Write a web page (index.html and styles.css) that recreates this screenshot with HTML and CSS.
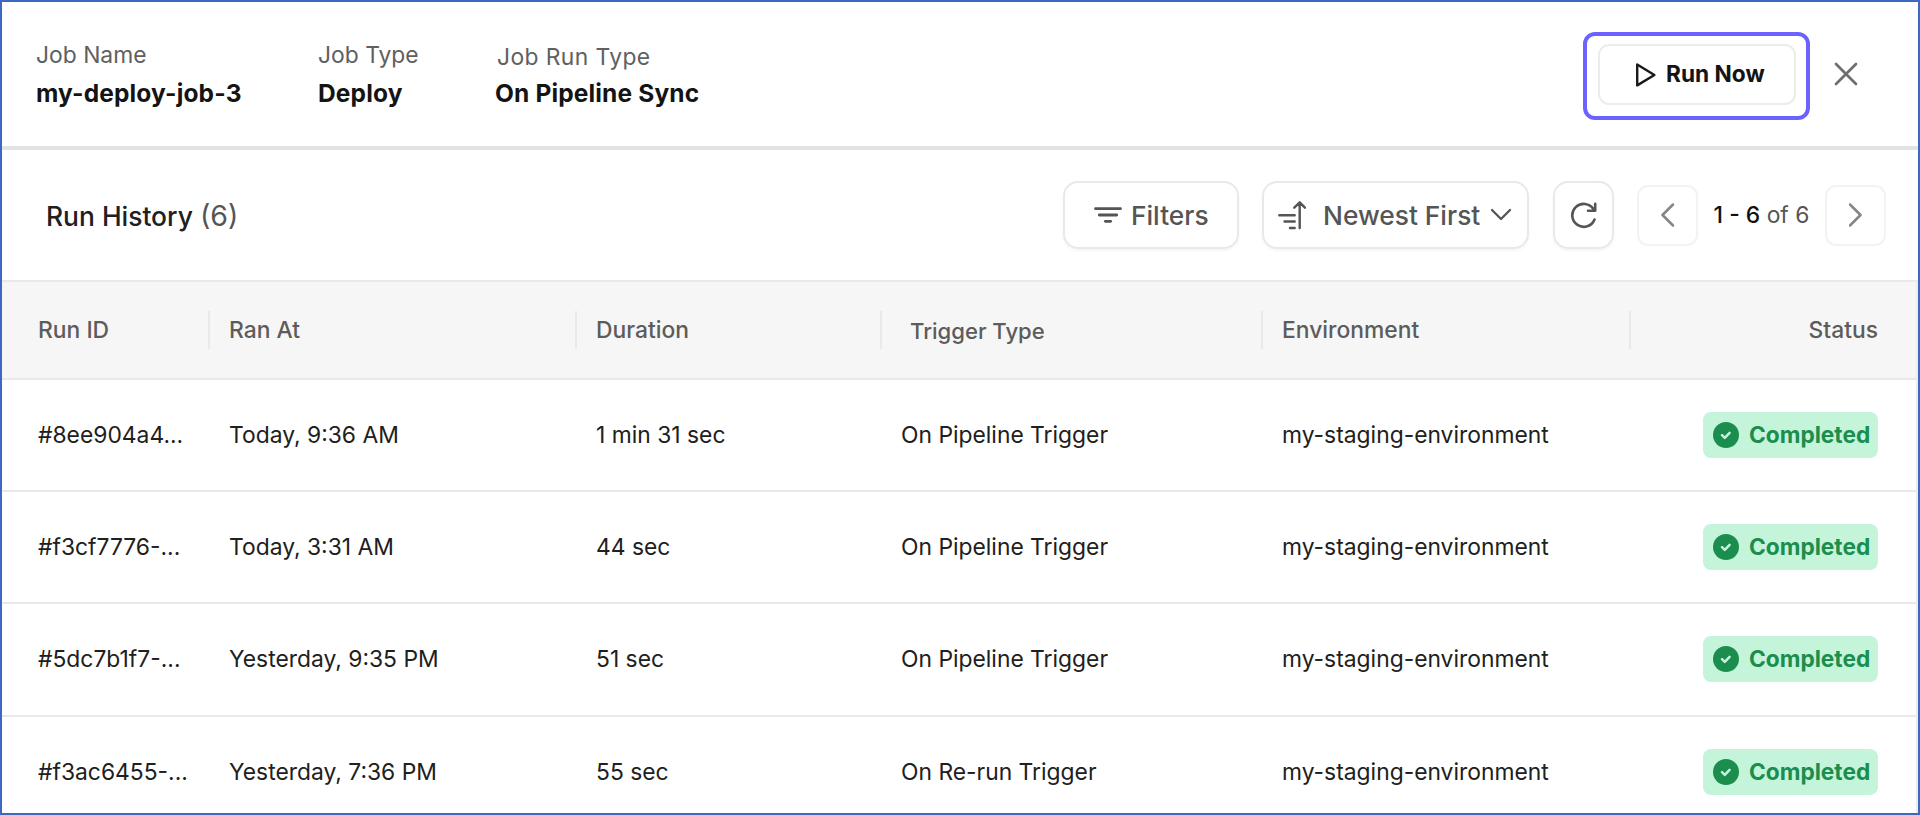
FILE: index.html
```html
<!DOCTYPE html>
<html lang="en">
<head>
    <meta charset="UTF-8">
    <meta name="viewport" content="width=device-width, initial-scale=1.0">
    <title>Run History</title>
    <link rel="stylesheet" href="styles.css">
</head>
<body>
    <svg class="sprite" width="0" height="0">
        <symbol id="check" viewBox="0 0 26 26">
            <circle cx="13" cy="13" r="13" fill="#1b8d4d"/>
            <path d="M9 13.2l2.8 2.7 4.8-5" fill="none" stroke="#c4f5da" stroke-width="2.5" stroke-linecap="round" stroke-linejoin="round"/>
        </symbol>
    </svg>
    <div class="panel">
        <header class="job-header">
            <div class="job-info name">
                <p class="label">Job Name</p>
                <p class="value">my-deploy-job-3</p>
            </div>
            <div class="job-info type">
                <p class="label">Job Type</p>
                <p class="value">Deploy</p>
            </div>
            <div class="job-info run-type">
                <p class="label">Job Run Type</p>
                <p class="value">On Pipeline Sync</p>
            </div>
            <div class="highlight">
                <button class="run-btn">
                    <svg width="22" height="26" viewBox="0 0 22 26" fill="none" stroke="#1a1a1a" stroke-width="2.4" stroke-linejoin="round"><path d="M2.2 2.4v21L19.4 13z"/></svg>
                    <span>Run Now</span>
                </button>
            </div>
            <button class="close-btn">
                <svg width="24" height="24" viewBox="0 0 24 24" fill="none" stroke="#6e6e6e" stroke-width="2.7" stroke-linecap="round"><path d="M2 2l20 20M22 2L2 22"/></svg>
            </button>
        </header>

        <div class="toolbar">
            <h1>Run History <span class="count">(6)</span></h1>
            <button class="tool-btn filters">
                <svg width="28" height="20" viewBox="0 0 28 20" fill="none" stroke="#555" stroke-width="2.8" stroke-linecap="round"><path d="M1.5 3.7h25M5.3 10h17.4M11.3 16.3h5.4"/></svg>
                <span>Filters</span>
            </button>
            <button class="tool-btn sort">
                <svg width="28" height="30" viewBox="0 0 28 30" fill="none" stroke="#555" stroke-width="2.4" stroke-linecap="round" stroke-linejoin="round"><path d="M1.3 15.3h15.4M6.5 21.5h10.2M12 28h4.7M21.7 28V2.5M16.3 7.7l5.4-5.4 5.2 5.4"/></svg>
                <span>Newest First</span>
                <svg class="caret" width="22" height="14" viewBox="0 0 22 14" fill="none" stroke="#555" stroke-width="2.3" stroke-linecap="round" stroke-linejoin="round"><path d="M2 2l9 9 9-9"/></svg>
            </button>
            <button class="tool-btn refresh">
                <svg width="28" height="28" viewBox="0 0 28 28" fill="none" stroke="#555" stroke-width="2.6" stroke-linecap="round" stroke-linejoin="round"><path d="M24.5 18.5A11.5 11.5 0 1 1 23.5 8.2M25.2 2.8v7H18"/></svg>
            </button>
            <button class="page-btn">
                <svg width="14" height="24" viewBox="0 0 14 24" fill="none" stroke="#858585" stroke-width="2.5" stroke-linecap="round" stroke-linejoin="round"><path d="M12 1.5L1.500 12 12 22.500"/></svg>
            </button>
            <div class="page-info"><b>1 - 6</b> of 6</div>
            <button class="page-btn next">
                <svg width="14" height="24" viewBox="0 0 14 24" fill="none" stroke="#858585" stroke-width="2.5" stroke-linecap="round" stroke-linejoin="round"><path d="M1 1.5L11.5 12 1 22.5"/></svg>
            </button>
        </div>

        <div class="table">
            <div class="row head">
                <div>Run ID</div>
                <div>Ran At</div>
                <div>Duration</div>
                <div class="trigger">Trigger Type</div>
                <div>Environment</div>
                <div class="status">Status</div>
            </div>
            <div class="row">
                <div>#8ee904a4...</div>
                <div>Today, 9:36 AM</div>
                <div>1 min 31 sec</div>
                <div>On Pipeline Trigger</div>
                <div>my-staging-environment</div>
                <div class="status"><span class="badge"><svg width="26" height="26"><use href="#check"/></svg>Completed</span></div>
            </div>
            <div class="row">
                <div>#f3cf7776-...</div>
                <div>Today, 3:31 AM</div>
                <div>44 sec</div>
                <div>On Pipeline Trigger</div>
                <div>my-staging-environment</div>
                <div class="status"><span class="badge"><svg width="26" height="26"><use href="#check"/></svg>Completed</span></div>
            </div>
            <div class="row">
                <div>#5dc7b1f7-...</div>
                <div>Yesterday, 9:35 PM</div>
                <div>51 sec</div>
                <div>On Pipeline Trigger</div>
                <div>my-staging-environment</div>
                <div class="status"><span class="badge"><svg width="26" height="26"><use href="#check"/></svg>Completed</span></div>
            </div>
            <div class="row">
                <div>#f3ac6455-...</div>
                <div>Yesterday, 7:36 PM</div>
                <div>55 sec</div>
                <div>On Re-run Trigger</div>
                <div>my-staging-environment</div>
                <div class="status"><span class="badge"><svg width="26" height="26"><use href="#check"/></svg>Completed</span></div>
            </div>
        </div>
    </div>
</body>
</html>
```
FILE: styles.css
```css
* {
    box-sizing: border-box;
    margin: 0;
    padding: 0;
}
body {
    font-family: Inter, sans-serif;
    font-size: 22.85px;
    color: #202020;
    background: #fff;
    overflow: hidden;
}
svg {
    display: block;
    flex: none;
}
.sprite {
    display: none;
}
button {
    display: flex;
    align-items: center;
    font-family: inherit;
    background: #fff;
    cursor: pointer;
}
.panel {
    height: 815px;
    border: 2px solid #3c68c5;
    overflow: hidden;
}

/* job header */
.job-header {
    display: flex;
    align-items: flex-start;
    height: 148px;
    padding-left: 34px;
    border-bottom: 4px solid #e1e4e7;
}
.job-info {
    padding-top: 38px;
    white-space: nowrap;
}
.label {
    height: 30px;
    line-height: 30px;
    color: #606060;
}
.value {
    margin-top: 7px;
    height: 32px;
    line-height: 32px;
    font-size: 24.5px;
    font-weight: 700;
    letter-spacing: 0.15px;
    color: #141414;
}
.name {
    width: 282px;
}
.type {
    width: 177px;
}
.run-type .label {
    padding: 2px 0 0 2px;
    height: 30px;
    letter-spacing: 0.4px;
}
.highlight {
    width: 227px;
    height: 88px;
    margin: 30px 0 0 auto;
    padding: 8px 0 0 11px;
    border: 4px solid #6c63ff;
    border-radius: 12px;
}
.run-btn {
    width: 198px;
    height: 61px;
    padding-left: 35px;
    gap: 9px;
    border: 2px solid #ececec;
    border-radius: 11px;
    font-size: 22.7px;
    font-weight: 700;
    color: #141414;
}
.run-btn span {
    padding-bottom: 2px;
}
.close-btn {
    margin: 60px 60px 0 24px;
    border: none;
}

/* toolbar */
.toolbar {
    display: flex;
    align-items: center;
    height: 130px;
    padding: 0 32px 0 44px;
}
h1 {
    margin-right: auto;
    font-size: 26.4px;
    font-weight: 500;
}
.count {
    font-size: 28.5px;
    font-weight: 400;
    color: #555;
}
.tool-btn {
    height: 68px;
    border: 2px solid #e9e9e9;
    border-radius: 15px;
    box-shadow: 0 2px 3px rgba(0, 0, 0, 0.04);
    font-size: 26.3px;
    font-weight: 500;
    color: #555;
}
.filters {
    width: 176px;
    padding-left: 29px;
    gap: 9px;
    margin-right: 23px;
}
.sort {
    width: 267px;
    padding-left: 14px;
    gap: 17px;
    margin-right: 24px;
}
.caret {
    margin-left: -7px;
}
.refresh {
    width: 61px;
    justify-content: center;
    margin-right: 23px;
}
.page-btn {
    width: 61px;
    height: 61px;
    justify-content: center;
    border: 2px solid #f3f3f3;
    border-radius: 11px;
}
.page-info {
    width: 127px;
    text-align: center;
    white-space: nowrap;
    color: #555;
}
.page-info b {
    font-weight: 500;
    color: #111;
}

/* run table */
.table {
    border-top: 2px solid #e9e9e9;
    border-right: 2px solid #ededed;
}
.row {
    display: grid;
    grid-template-columns: 191px 367px 305px 381px 368px 1fr;
    align-items: center;
    height: 112.4px;
    padding: 0 38px 0 36px;
    border-bottom: 2px solid #e9e9e9;
    white-space: nowrap;
}
.head {
    height: 97.5px;
    background: #f6f6f6;
    color: #5c5c5c;
    font-weight: 500;
}
.head div {
    line-height: 38px;
    margin-right: 19px;
    border-right: 2px solid #e9e9e9;
}
.head .trigger {
    padding: 2px 0 0 9px;
    line-height: 36px;
    font-size: 22.1px;
}
.head .status {
    margin: 0;
    border: none;
}
.status {
    display: flex;
    justify-content: flex-end;
}
.badge {
    display: flex;
    align-items: center;
    width: 175px;
    height: 46px;
    padding-left: 10px;
    gap: 10px;
    border-radius: 8px;
    background: #c4f5da;
    color: #1b8d4d;
    font-size: 22.7px;
    font-weight: 700;
    line-height: 26px;
}
```
